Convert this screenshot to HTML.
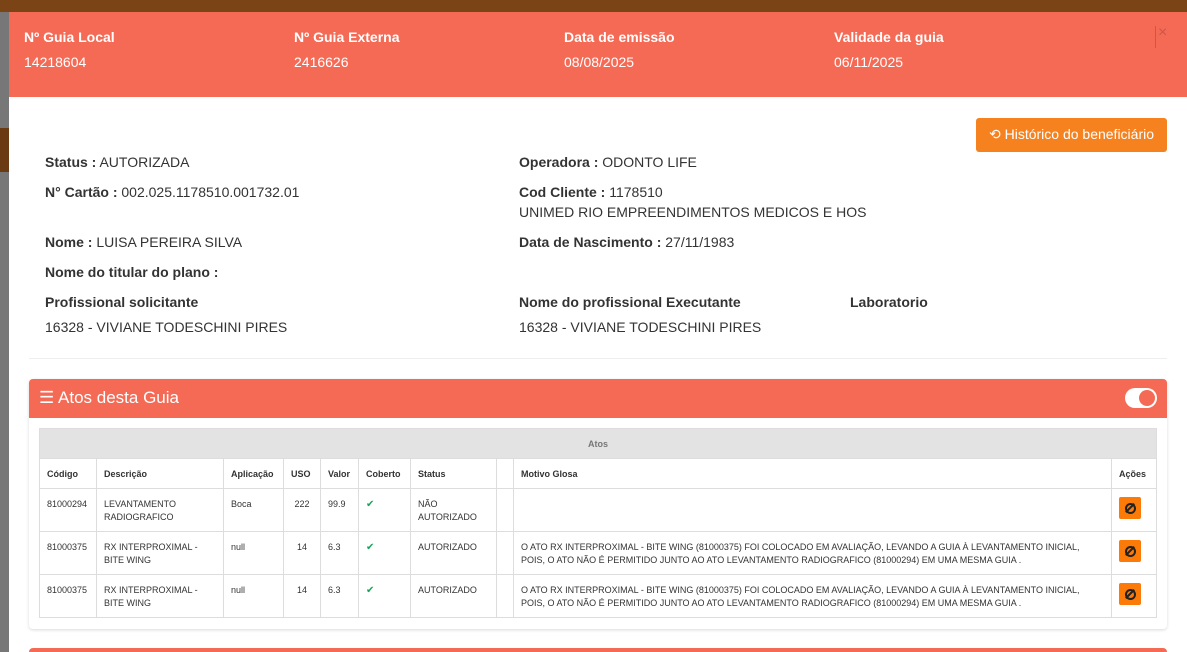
<!DOCTYPE html>
<html><head><meta charset="utf-8"><style>
*{box-sizing:border-box;margin:0;padding:0}
body{width:1187px;height:652px;overflow:hidden;position:relative;font-family:"Liberation Sans",Arial,sans-serif;background:#777;color:#333}
.a{position:absolute}
.top{left:0;top:0;width:1187px;height:12px;background:#7a4416}
.modal{left:9px;top:12px;width:1178px;height:640px;background:#fff}
.hdr{left:9px;top:12px;width:1178px;height:85px;background:#f56a55;color:#fff;font-size:14px}
.hdr b{position:absolute;top:17px}
.hdr span{position:absolute;top:42px}
.lbl{font-size:14px;color:#333}
.lbl b{font-weight:bold}
.btn{left:976px;top:118px;width:191px;height:34px;background:#f5821f;color:#fff;font-size:14px;border-radius:3px;text-align:center;line-height:33px}
.panel{left:29px;top:379px;width:1138px;height:250px;background:#fff;box-shadow:0 1px 3px rgba(0,0,0,.15);border-radius:4px}
.ph{left:29px;top:379px;width:1138px;height:39px;background:#f56a55;border-radius:4px 4px 0 0;color:#fff;font-size:17px}
table{position:absolute;left:39px;top:428px;width:1118px;border-collapse:collapse;font-size:9px;color:#333;table-layout:fixed}
td,th{border:1px solid #ddd;padding:0 7px;text-align:left;vertical-align:top}
th{font-weight:bold;height:30px;vertical-align:middle}
.g th{background:#e3e3e3;color:#777;text-align:center;height:30px}
tr.r td{height:43px;padding-top:9px;line-height:13px}
.ico{display:inline-block;width:22px;height:22px;background:#fb7a08;border-radius:2px;margin-top:-1px;position:relative}
.ico:after{content:"";position:absolute;left:6px;top:6px;width:7px;height:7px;border:2px solid #222;border-radius:50%}
.ico:before{content:"";position:absolute;left:10px;top:5px;width:2px;height:12px;background:#222;transform:rotate(45deg);z-index:1}
.ck{color:#1aa35a;font-size:10px}
</style></head><body>
<div class="a top"></div>
<div class="a" style="left:0;top:128px;width:9px;height:44px;background:#6a3b13"></div>
<div class="a modal"></div>
<div class="a hdr">
<b style="left:15px">Nº Guia Local</b><span style="left:15px">14218604</span>
<b style="left:285px">Nº Guia Externa</b><span style="left:285px">2416626</span>
<b style="left:555px">Data de emissão</b><span style="left:555px">08/08/2025</span>
<b style="left:825px">Validade da guia</b><span style="left:825px">06/11/2025</span>
<div class="a" style="left:1146px;top:14px;width:1px;height:22px;background:#c9584a"></div>
<span style="left:1149px;top:12px;font-size:16px;color:#c9584a">×</span>
</div>
<div class="a btn">⟲ Histórico do beneficiário</div>
<div class="a lbl" style="left:45px;top:154px"><b>Status :</b> AUTORIZADA</div>
<div class="a lbl" style="left:45px;top:184px"><b>N° Cartão :</b> 002.025.1178510.001732.01</div>
<div class="a lbl" style="left:45px;top:234px"><b>Nome :</b> LUISA PEREIRA SILVA</div>
<div class="a lbl" style="left:45px;top:264px"><b>Nome do titular do plano :</b></div>
<div class="a lbl" style="left:45px;top:294px"><b>Profissional solicitante</b></div>
<div class="a lbl" style="left:45px;top:319px">16328 - VIVIANE TODESCHINI PIRES</div>
<div class="a lbl" style="left:519px;top:154px"><b>Operadora :</b> ODONTO LIFE</div>
<div class="a lbl" style="left:519px;top:184px"><b>Cod Cliente :</b> 1178510</div>
<div class="a lbl" style="left:519px;top:204px">UNIMED RIO EMPREENDIMENTOS MEDICOS E HOS</div>
<div class="a lbl" style="left:519px;top:234px"><b>Data de Nascimento :</b> 27/11/1983</div>
<div class="a lbl" style="left:519px;top:294px"><b>Nome do profissional Executante</b></div>
<div class="a lbl" style="left:519px;top:319px">16328 - VIVIANE TODESCHINI PIRES</div>
<div class="a lbl" style="left:850px;top:294px"><b>Laboratorio</b></div>
<div class="a" style="left:29px;top:358px;width:1138px;height:1px;background:#eee"></div>
<div class="a panel"></div>
<div class="a ph"><span class="a" style="left:10px;top:9px">☰ Atos desta Guia</span>
<div class="a" style="left:1096px;top:9px;width:32px;height:20px;background:#fff;border-radius:10px"><div class="a" style="left:14px;top:2px;width:16px;height:16px;border-radius:50%;background:#f56a55"></div></div></div>
<table>
<colgroup><col style="width:57px"><col style="width:127px"><col style="width:60px"><col style="width:37px"><col style="width:38px"><col style="width:52px"><col style="width:86px"><col style="width:17px"><col><col style="width:45px"></colgroup>
<tr class="g"><th colspan="10">Atos</th></tr>
<tr><th>Código</th><th>Descrição</th><th>Aplicação</th><th>USO</th><th>Valor</th><th>Coberto</th><th>Status</th><th></th><th>Motivo Glosa</th><th>Ações</th></tr>
<tr class="r"><td>81000294</td><td>LEVANTAMENTO<br>RADIOGRAFICO</td><td>Boca</td><td style="text-align:center">222</td><td>99.9</td><td class="ck">✔</td><td>NÃO<br>AUTORIZADO</td><td></td><td></td><td><span class="ico"></span></td></tr>
<tr class="r"><td>81000375</td><td>RX INTERPROXIMAL -<br>BITE WING</td><td>null</td><td style="text-align:center">14</td><td>6.3</td><td class="ck">✔</td><td>AUTORIZADO</td><td></td><td>O ATO RX INTERPROXIMAL - BITE WING (81000375) FOI COLOCADO EM AVALIAÇÃO, LEVANDO A GUIA À LEVANTAMENTO INICIAL,<br>POIS, O ATO NÃO É PERMITIDO JUNTO AO ATO LEVANTAMENTO RADIOGRAFICO (81000294) EM UMA MESMA GUIA .</td><td><span class="ico"></span></td></tr>
<tr class="r"><td>81000375</td><td>RX INTERPROXIMAL -<br>BITE WING</td><td>null</td><td style="text-align:center">14</td><td>6.3</td><td class="ck">✔</td><td>AUTORIZADO</td><td></td><td>O ATO RX INTERPROXIMAL - BITE WING (81000375) FOI COLOCADO EM AVALIAÇÃO, LEVANDO A GUIA À LEVANTAMENTO INICIAL,<br>POIS, O ATO NÃO É PERMITIDO JUNTO AO ATO LEVANTAMENTO RADIOGRAFICO (81000294) EM UMA MESMA GUIA .</td><td><span class="ico"></span></td></tr>
</table>
<div class="a" style="left:29px;top:648px;width:1138px;height:4px;background:#f56a55;border-radius:4px 4px 0 0"></div>
</body></html>
